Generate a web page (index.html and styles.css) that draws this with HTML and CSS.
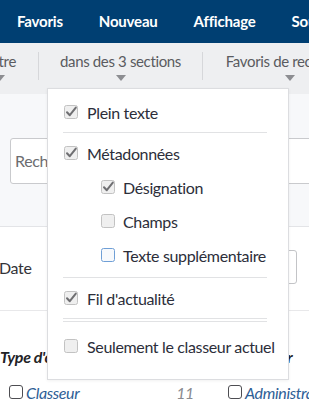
FILE: index.html
```html
<!DOCTYPE html>
<html lang="fr">
<head>
<meta charset="utf-8">
<title>Recherche</title>
<link rel="stylesheet" href="styles.css">
</head>
<body>
<div class="page">
  <header class="topnav">
    <span class="nav-item">Favoris</span>
    <span class="nav-item">Nouveau</span>
    <span class="nav-item">Affichage</span>
    <span class="nav-item">Sources</span>
  </header>

  <div class="toolbar">
    <div class="tb-item tb-first"><span class="tb-label">Filtre</span><i class="tri"></i></div>
    <div class="tb-sep"></div>
    <div class="tb-item tb-second"><span class="tb-label">dans des 3 sections</span><i class="tri"></i></div>
    <div class="tb-sep"></div>
    <div class="tb-item tb-third"><span class="tb-label">Favoris de recherche</span><i class="tri"></i></div>
  </div>

  <div class="search-area">
    <div class="search-input">Rechercher</div>
  </div>

  <div class="date-row">
    <span class="date-label">Date</span>
    <div class="date-input"></div>
  </div>

  <div class="facets">
    <div class="facet-col facet-left">
      <div class="facet-title">Type d'objet</div>
      <div class="facet-opt">
        <span class="box"></span><span class="facet-name">Classeur</span><span class="facet-count">11</span>
      </div>
    </div>
    <div class="facet-col facet-right">
      <div class="facet-title">Créateur</div>
      <div class="facet-opt">
        <span class="box"></span><span class="facet-name">Administrateur</span>
      </div>
    </div>
  </div>

  <div class="dropdown">
    <div class="opt">
      <svg class="cb" viewBox="0 0 14 14"><rect x="0.5" y="0.5" width="13" height="13" rx="2" class="cb-box"/><path d="M3 7.2 L5.8 10.2 L11.8 2.6" class="cb-check"/></svg>
      <span>Plein texte</span>
    </div>
    <div class="sep"></div>
    <div class="opt">
      <svg class="cb" viewBox="0 0 14 14"><rect x="0.5" y="0.5" width="13" height="13" rx="2" class="cb-box"/><path d="M3 7.2 L5.8 10.2 L11.8 2.6" class="cb-check"/></svg>
      <span>Métadonnées</span>
    </div>
    <div class="opt sub">
      <svg class="cb" viewBox="0 0 14 14"><rect x="0.5" y="0.5" width="13" height="13" rx="2" class="cb-box"/><path d="M3 7.2 L5.8 10.2 L11.8 2.6" class="cb-check"/></svg>
      <span>Désignation</span>
    </div>
    <div class="opt sub">
      <svg class="cb" viewBox="0 0 14 14"><rect x="0.5" y="0.5" width="13" height="13" rx="2" class="cb-box"/></svg>
      <span>Champs</span>
    </div>
    <div class="opt sub">
      <svg class="cb" viewBox="0 0 14 14"><rect x="0.5" y="0.5" width="13" height="13" rx="2" class="cb-box cb-focus"/></svg>
      <span>Texte supplémentaire</span>
    </div>
    <div class="sep sep-b"></div>
    <div class="opt">
      <svg class="cb" viewBox="0 0 14 14"><rect x="0.5" y="0.5" width="13" height="13" rx="2" class="cb-box"/><path d="M3 7.2 L5.8 10.2 L11.8 2.6" class="cb-check"/></svg>
      <span>Fil d'actualité</span>
    </div>
    <div class="sep-double"></div>
    <div class="opt">
      <svg class="cb" viewBox="0 0 14 14"><rect x="0.5" y="0.5" width="13" height="13" rx="2" class="cb-box"/></svg>
      <span>Seulement le classeur actuel</span>
    </div>
  </div>
</div>
</body>
</html>
```

FILE: styles.css
```css
* { box-sizing: border-box; }
html, body { margin: 0; padding: 0; }
body {
  width: 309px;
  height: 402px;
  overflow: hidden;
  font-family: Lato, "Liberation Sans", sans-serif;
  letter-spacing: -0.35px;
  background: #ffffff;
}
.page {
  position: relative;
  width: 309px;
  height: 402px;
  overflow: hidden;
}

/* top navigation */
.topnav {
  height: 43px;
  background: #003f72;
  display: flex;
  align-items: center;
  gap: 36px;
  padding-left: 17px;
  white-space: nowrap;
}
.nav-item {
  color: #ffffff;
  font-size: 15px;
  font-weight: 700;
  letter-spacing: -0.2px;
  flex-shrink: 0;
  padding-bottom: 2px;
}

/* toolbar */
.toolbar {
  height: 51px;
  background: #eeeff1;
  display: flex;
  align-items: flex-start;
  white-space: nowrap;
}
.tb-item {
  flex-shrink: 0;
  display: flex;
  flex-direction: column;
  align-items: center;
  padding-top: 9px;
}
.tb-first { width: 76px; margin-left: -38px; }
.tb-second { width: 163px; }
.tb-third { width: 174px; }
.tb-label {
  font-size: 15px;
  line-height: 18px;
  color: #5a5b60;
}
.tri {
  display: block;
  margin-top: 5px;
  width: 0;
  height: 0;
  border-left: 5px solid transparent;
  border-right: 5px solid transparent;
  border-top: 6px solid #8c8d91;
}
.tb-sep {
  flex-shrink: 0;
  width: 1px;
  height: 28px;
  margin-top: 9px;
  background: #d6d7da;
}

/* search */
.search-area {
  height: 133px;
  background: #f7f8fa;
  border-bottom: 1px solid #e3e4e7;
  padding-top: 44px;
}
.search-input {
  margin-left: 10px;
  width: 330px;
  height: 46px;
  border: 1px solid #c9cacd;
  border-radius: 3px;
  background: #ffffff;
  padding-left: 4px;
  font-size: 16px;
  line-height: 44px;
  color: #6c6c70;
  white-space: nowrap;
}

/* date row */
.date-row {
  height: 84px;
  display: flex;
  align-items: center;
  border-bottom: 1px solid #e8e8ea;
  padding-bottom: 3px;
}
.date-label {
  margin-left: -1px;
  font-size: 16px;
  color: #333338;
}
.date-input {
  margin-left: auto;
  margin-right: 12px;
  width: 230px;
  height: 34px;
  border: 1px solid #c3c4c7;
  border-radius: 3px;
  background: #fff;
}

/* facets */
.facets {
  display: grid;
  grid-template-columns: 228px 1fr;
  padding-top: 36px;
  white-space: nowrap;
}
.facet-title {
  font-size: 16px;
  line-height: 20px;
  font-weight: 700;
  font-style: italic;
  color: #222226;
}
.facet-right .facet-title { padding-left: 8px; }
.facet-opt {
  margin-top: 15px;
  display: flex;
  align-items: center;
  height: 20px;
  font-size: 16px;
  font-style: italic;
}
.facet-left .facet-opt { padding-left: 9px; }
.box {
  flex-shrink: 0;
  width: 14px;
  height: 14px;
  border: 1px solid #4d4d52;
  border-radius: 3px;
  background: #fff;
  margin-right: 3px;
}
.facet-name { color: #2e5e96; }
.facet-count {
  margin-left: auto;
  margin-right: 34px;
  color: #8a8b90;
}

/* dropdown */
.dropdown {
  position: absolute;
  left: 47px;
  top: 88px;
  width: 242px;
  height: 292px;
  background: #ffffff;
  border: 1px solid #dcdde0;
  padding-top: 6px;
  box-shadow: 0 1px 3px rgba(0,0,0,0.06);
}
.opt {
  height: 34px;
  display: flex;
  align-items: center;
  gap: 9px;
  padding-left: 16px;
  font-size: 16px;
  color: #2c2e3a;
  white-space: nowrap;
}
.opt.sub { padding-left: 53px; gap: 8px; }
.cb {
  width: 14px;
  height: 14px;
  flex-shrink: 0;
  overflow: visible;
}
.cb-box {
  fill: #efefef;
  stroke: #c2c2c2;
  stroke-width: 1;
}
.cb-focus {
  fill: #f7f9fc;
  stroke: #6f9fd6;
}
.cb-check {
  fill: none;
  stroke: #6f6f72;
  stroke-width: 2;
  stroke-linecap: round;
  stroke-linejoin: round;
}
.sep {
  height: 1px;
  background: #e1e2e4;
  margin: 3px 21px 3px 15px;
}
.sep-b { margin-top: 5px; }
.sep-double {
  height: 4px;
  border-top: 1px solid #e1e2e4;
  border-bottom: 1px solid #e1e2e4;
  margin: 3px 21px 7px 15px;
}
```
